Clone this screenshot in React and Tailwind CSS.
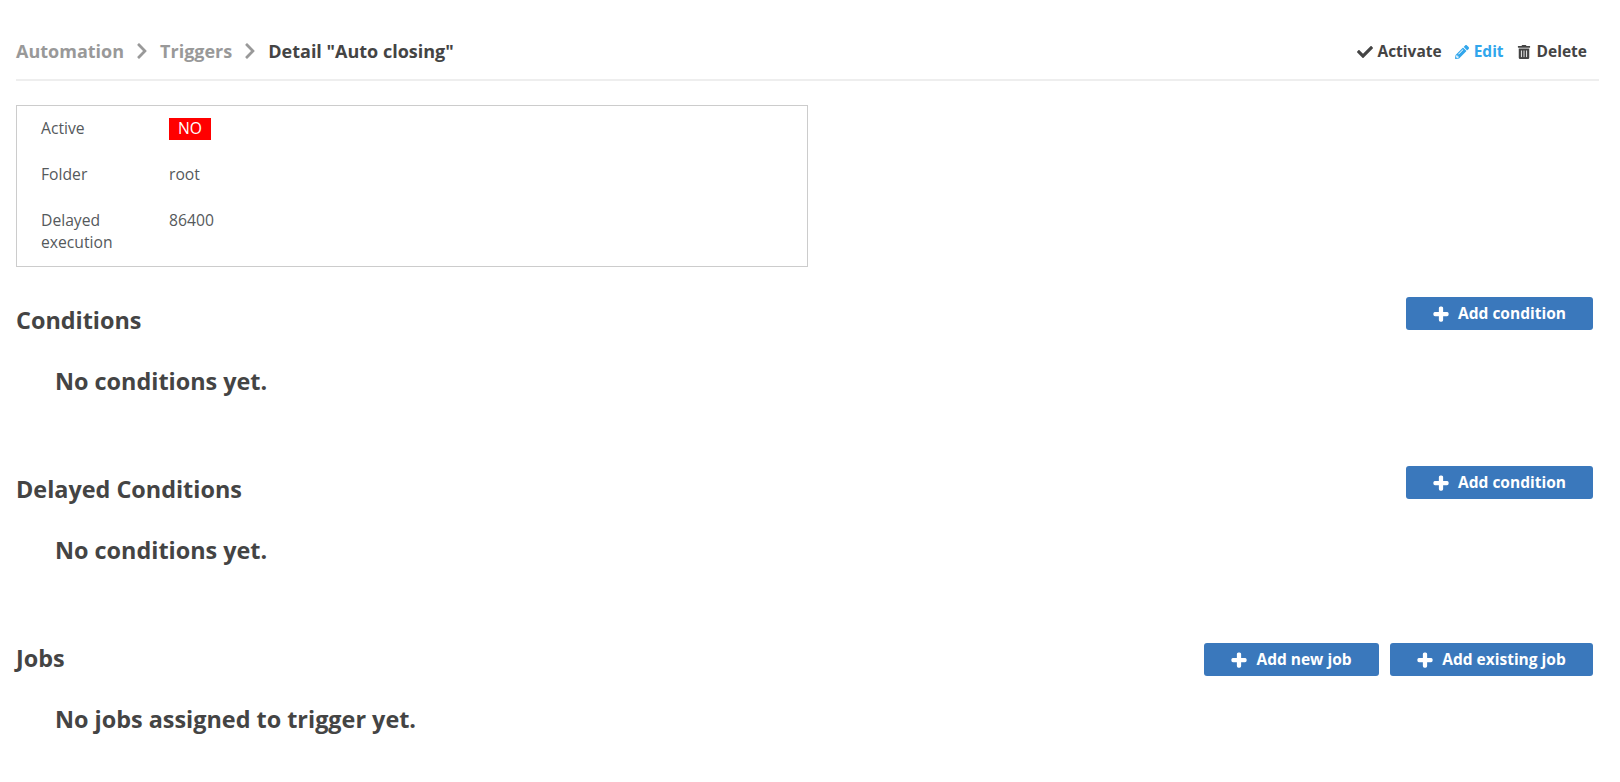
import { FaCheck, FaPencilAlt, FaTrashAlt, FaPlus, FaChevronRight } from "react-icons/fa";

function AddButton({ label, className = "" }) {
  return (
    <button className={`flex h-[33px] items-center justify-center gap-[9px] rounded-[3px] bg-[#3a78bc] text-[15.5px] font-bold text-white ${className}`}>
      <FaPlus className="text-[16px]" stroke="currentColor" strokeWidth={40} />
      {label}
    </button>
  );
}

function Section({ title, empty, children, className = "", actionsClassName = "" }) {
  return (
    <section className={className}>
      <div className="flex h-[38px] items-start justify-between pr-[6px]">
        <h2 className="pt-[8px] text-[23.4px] font-bold leading-[30px]">{title}</h2>
        <div className={`flex gap-[11px] ${actionsClassName}`}>{children}</div>
      </div>
      <p className="mt-[31px] pl-[39px] text-[23.4px] font-bold leading-[30px]">{empty}</p>
    </section>
  );
}

function Row({ label, children, className = "" }) {
  return (
    <div className={`flex text-[15.7px] leading-[22px] text-[#55595c] ${className}`}>
      <div className="w-[152px] pl-[24px] pr-[16px]">{label}</div>
      <div>{children}</div>
    </div>
  );
}

export default function App() {
  return (
    <div className="min-h-[782px] bg-white pl-[16px] pr-[21px] font-['Open_Sans',sans-serif] text-[#444444]">
      <header className="flex h-[81px] items-center justify-between border-b-2 border-[#eeeeee] pt-[23px] pr-[12px]">
        <div className="flex items-center text-[18px] font-bold">
          <span className="text-[#999999]">Automation</span>
          <FaChevronRight className="mx-[9px] text-[18px] text-[#999999]" />
          <span className="text-[#999999]">Triggers</span>
          <FaChevronRight className="mx-[9px] text-[18px] text-[#999999]" />
          <span>Detail "Auto closing"</span>
        </div>
        <div className="flex items-center pt-[2px] text-[15.5px] font-bold">
          <span className="flex items-center gap-[4px]"><FaCheck className="text-[16px]" />Activate</span>
          <span className="ml-[13px] flex items-center gap-[5px] text-[#31a6ec]"><FaPencilAlt className="text-[14px]" />Edit</span>
          <span className="ml-[13px] flex items-center gap-[6px]"><FaTrashAlt className="text-[14px]" />Delete</span>
        </div>
      </header>

      <div className="mt-[24px] h-[162px] w-[792px] border border-[#cccccc] pt-[11px]">
        <Row label="Active">
          <span className="mt-[1px] block h-[22px] w-[42px] bg-[#ff0000] text-center leading-[20px] text-white">NO</span>
        </Row>
        <Row label="Folder" className="mt-[23px]">root</Row>
        <Row label={<>Delayed<br />execution</>} className="mt-[24px]">86400</Row>
      </div>

      <Section title="Conditions" empty="No conditions yet." className="mt-[30px]">
        <AddButton label="Add condition" className="w-[187px]" />
      </Section>
      <Section title="Delayed Conditions" empty="No conditions yet." className="mt-[70px]">
        <AddButton label="Add condition" className="w-[187px]" />
      </Section>
      <Section title="Jobs" empty="No jobs assigned to trigger yet." className="mt-[70px]" actionsClassName="mt-[8px]">
        <AddButton label="Add new job" className="w-[175px]" />
        <AddButton label="Add existing job" className="w-[203px]" />
      </Section>
    </div>
  );
}
